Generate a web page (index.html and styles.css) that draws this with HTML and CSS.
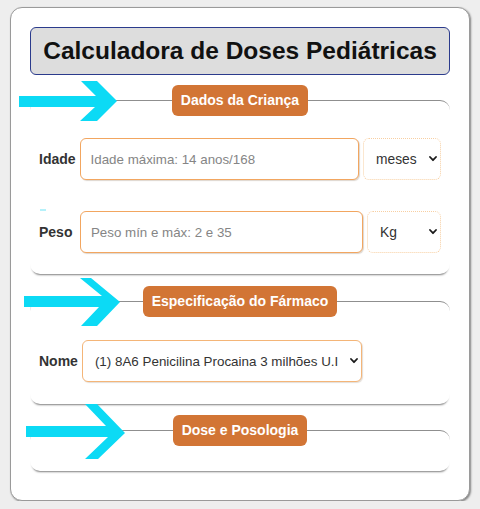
FILE: index.html
```html
<!DOCTYPE html>
<html lang="pt-BR">
<head>
<meta charset="utf-8">
<title>Calculadora de Doses Pediátricas</title>
<link rel="stylesheet" href="styles.css">
</head>
<body>
<main class="card">
  <h1 class="title">Calculadora de Doses Pediátricas</h1>

  <section class="group group-crianca">
    <svg class="arrow arrow-1" width="98" height="42" viewBox="0 0 98 42" aria-hidden="true">
      <polygon points="0,16 77,16 62,1 78,1 98,21 78,41 61,41 76,27 0,27"/>
    </svg>
    <span class="speck"></span>
    <div class="legend">Dados da Criança</div>
    <div class="row row-idade">
      <label class="label" for="idade">Idade</label>
      <input class="field" id="idade" type="text" placeholder="Idade máxima: 14 anos/168">
      <div class="select-wrap unit-idade">
        <select class="select"><option>meses</option></select>
        <svg class="chev" width="8" height="6" viewBox="0 0 8 6" aria-hidden="true"><polyline points="1,1 4,4.2 7,1"/></svg>
      </div>
    </div>
    <div class="row row-peso">
      <label class="label" for="peso">Peso</label>
      <input class="field" id="peso" type="text" placeholder="Peso mín e máx: 2 e 35">
      <div class="select-wrap unit-peso">
        <select class="select"><option>Kg</option></select>
        <svg class="chev" width="8" height="6" viewBox="0 0 8 6" aria-hidden="true"><polyline points="1,1 4,4.2 7,1"/></svg>
      </div>
    </div>
  </section>

  <section class="group group-farmaco">
    <svg class="arrow arrow-2" width="97" height="50" viewBox="0 0 97 50" aria-hidden="true">
      <polygon points="0,19 78,19 56,1 67,1 96,25 73,49 57,49 75,30 0,30"/>
    </svg>
    <div class="legend">Especificação do Fármaco</div>
    <div class="row row-nome">
      <label class="label" for="nome">Nome</label>
      <div class="select-wrap nome-wrap">
        <select class="select select-nome" id="nome"><option>(1) 8A6 Penicilina Procaina 3 milhões U.I</option></select>
        <svg class="chev" width="8" height="6" viewBox="0 0 8 6" aria-hidden="true"><polyline points="1,1 4,4.2 7,1"/></svg>
      </div>
    </div>
  </section>

  <section class="group group-dose">
    <svg class="arrow arrow-3" width="100" height="57" viewBox="0 0 100 57" aria-hidden="true">
      <polygon points="0,23 80,23 59,1 71,1 99,30 72,56 59,56 82,34 0,34"/>
    </svg>
    <div class="legend">Dose e Posologia</div>
  </section>
</main>
</body>
</html>
```

FILE: styles.css
```css
* {
  box-sizing: border-box;
}

html, body {
  margin: 0;
  padding: 0;
  background: #eeeeee;
}

body {
  font-family: "Liberation Sans", Arial, sans-serif;
  color: #333;
  padding: 7px 10px 0 10px;
}

.card {
  width: 460px;
  height: 494px;
  background: #fff;
  border: 1px solid #9a9a9a;
  border-radius: 12px;
  box-shadow: 1px 1px 2px rgba(0, 0, 0, 0.45);
  padding: 19px 19px 28px 19px;
}

.title {
  margin: 0;
  height: 48px;
  background: #dddddd;
  border: 1px solid #2b3b8c;
  border-radius: 6px;
  font-size: 24.5px;
  font-weight: bold;
  line-height: 46px;
  text-align: center;
  color: #111;
}

.group {
  position: relative;
  margin-top: 25px;
  border-top: 1px solid #8f8f8f;
  border-radius: 10px;
  box-shadow: 0 3px 2px -2px rgba(0, 0, 0, 0.5);
  padding: 0 9px 21px 9px;
}

.group-farmaco {
  margin-top: 27px;
  padding-bottom: 22px;
}

.group-dose {
  margin-top: 26px;
  padding-bottom: 25px;
}

.legend {
  position: relative;
  width: fit-content;
  margin: -16px auto 0 auto;
  background: #d27535;
  color: #fff;
  font-size: 14px;
  font-weight: bold;
  line-height: 19px;
  padding: 6px 9px;
  border-radius: 6px;
}

.arrow {
  position: absolute;
  fill: #0cdaf5;
}

.arrow-1 {
  left: -11px;
  top: -21px;
}

.arrow-2 {
  left: -6px;
  top: -25px;
}

.arrow-3 {
  left: -4px;
  top: -28px;
}

.speck {
  position: absolute;
  left: 10px;
  top: 108px;
  width: 6px;
  height: 2px;
  background: #b5f1fa;
}

.row {
  display: flex;
  align-items: center;
  gap: 4px;
  height: 42px;
}

.row-idade {
  margin-top: 22px;
}

.row-peso {
  margin-top: 31px;
}

.row-nome {
  margin-top: 23px;
}

.label {
  font-size: 14px;
  font-weight: bold;
  color: #333;
}

.row-peso .label {
  margin-right: 3.5px;
}

.field {
  flex: 1;
  min-width: 0;
  height: 42px;
  border: 1px solid #f2a660;
  border-radius: 6px;
  box-shadow: 1px 1px 1px rgba(120, 90, 60, 0.25);
  padding: 0 10px;
  font-family: "Liberation Sans", Arial, sans-serif;
  font-size: 13.33px;
  color: #333;
  background: #fff;
  outline: none;
}

.field::placeholder {
  color: #858585;
}

.select-wrap {
  position: relative;
  height: 42px;
}

.unit-idade {
  width: 78px;
}

.unit-peso {
  width: 74px;
}

.nome-wrap {
  width: 280px;
}

.select {
  appearance: none;
  -webkit-appearance: none;
  width: 100%;
  height: 42px;
  border: 1px dotted #f8cfa2;
  border-radius: 6px;
  background: #fff;
  padding: 0 14px 0 12px;
  font-family: "Liberation Sans", Arial, sans-serif;
  font-size: 13.8px;
  color: #333;
  outline: none;
}

.select-nome {
  font-size: 13.4px;
  border: 1px solid #f4b578;
  box-shadow: 1px 1px 1px rgba(120, 90, 60, 0.2);
}

.chev {
  position: absolute;
  right: 4px;
  top: 18px;
  fill: none;
  stroke: #1a1a1a;
  stroke-width: 1.8;
  stroke-linecap: round;
  stroke-linejoin: round;
  pointer-events: none;
}
```
